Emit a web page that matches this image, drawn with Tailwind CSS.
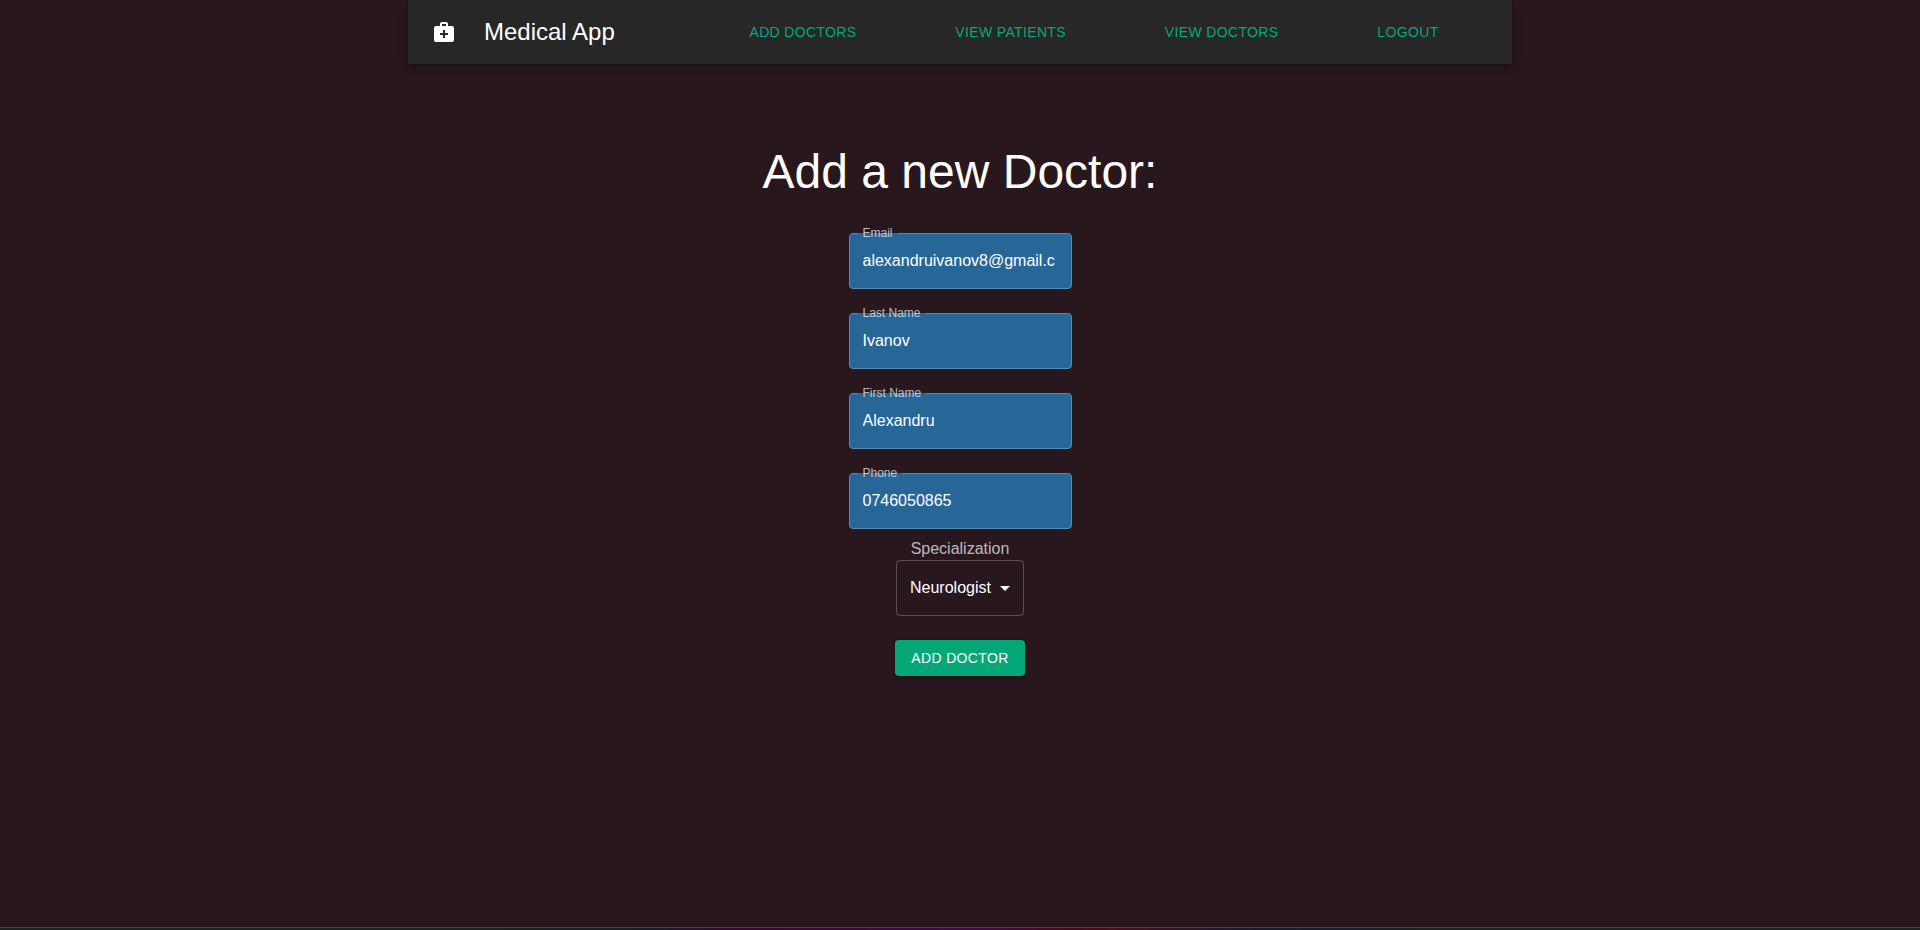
<!DOCTYPE html>
<html lang="en">
<head>
<meta charset="utf-8">
<meta name="viewport" content="width=device-width, initial-scale=1">
<title>Medical App</title>
<script src="https://cdn.jsdelivr.net/npm/@tailwindcss/browser@4"></script>
</head>
<body class="flex min-h-screen flex-col bg-[#28181e] font-['Liberation_Sans',Arial,sans-serif] text-white">
  <div class="mx-auto w-full max-w-6xl px-6">
    <header class="flex min-h-16 items-center bg-[#272727] px-6 shadow-[0_2px_4px_-1px_rgba(0,0,0,0.2),0_4px_5px_0_rgba(0,0,0,0.14),0_1px_10px_0_rgba(0,0,0,0.12)]">
      <div class="flex w-1/4 items-center gap-7">
        <svg class="size-6 shrink-0" viewBox="0 0 24 24" fill="currentColor" aria-hidden="true"><path d="M20 6h-4V4c0-1.100-.9-2-2-2h-4c-1.100 0-2 .9-2 2v2H4c-1.100 0-2 .9-2 2v12c0 1.100.9 2 2 2h16c1.100 0 2-.9 2-2V8c0-1.100-.9-2-2-2zM10 4h4v2h-4V4zm6 11h-3v3h-2v-3H8v-2h3v-3h2v3h3v2z"/></svg>
        <span class="whitespace-nowrap text-2xl">Medical App</span>
      </div>
      <nav class="flex flex-1 flex-wrap justify-around pl-1 text-sm tracking-wide text-[#04a777]">
        <a href="#add-doctors">ADD DOCTORS</a>
        <a href="#view-patients">VIEW PATIENTS</a>
        <a href="#view-doctors">VIEW DOCTORS</a>
        <a href="#logout">LOGOUT</a>
      </nav>
    </header>
  </div>

  <main class="flex flex-1 flex-col items-center px-4 pt-20">
    <h1 class="text-center text-5xl leading-[56px]">Add a new Doctor:</h1>
    <form class="mt-[33px] flex flex-col items-center">
      <div class="flex flex-col gap-6">
        <div class="relative">
          <input id="email" type="text" value="alexandruivanov8@gmail.c" class="block h-14 w-[223px] rounded-sm border border-[#588bb0] bg-[#266798] px-[13px] text-base outline-none">
          <label for="email" class="absolute isolate -top-2 left-[9px] px-[5px] text-xs text-white/70 before:absolute before:inset-x-0 before:top-2 before:-z-10 before:h-px before:bg-[#266798]">Email</label>
        </div>
        <div class="relative">
          <input id="last-name" type="text" value="Ivanov" class="block h-14 w-[223px] rounded-sm border border-[#588bb0] bg-[#266798] px-[13px] text-base outline-none">
          <label for="last-name" class="absolute isolate -top-2 left-[9px] px-[5px] text-xs text-white/70 before:absolute before:inset-x-0 before:top-2 before:-z-10 before:h-px before:bg-[#266798]">Last Name</label>
        </div>
        <div class="relative">
          <input id="first-name" type="text" value="Alexandru" class="block h-14 w-[223px] rounded-sm border border-[#588bb0] bg-[#266798] px-[13px] text-base outline-none">
          <label for="first-name" class="absolute isolate -top-2 left-[9px] px-[5px] text-xs text-white/70 before:absolute before:inset-x-0 before:top-2 before:-z-10 before:h-px before:bg-[#266798]">First Name</label>
        </div>
        <div class="relative">
          <input id="phone" type="tel" value="0746050865" class="block h-14 w-[223px] rounded-sm border border-[#588bb0] bg-[#266798] px-[13px] text-base outline-none">
          <label for="phone" class="absolute isolate -top-2 left-[9px] px-[5px] text-xs text-white/70 before:absolute before:inset-x-0 before:top-2 before:-z-10 before:h-px before:bg-[#266798]">Phone</label>
        </div>
      </div>

      <label for="specialization" class="mt-2 text-base leading-[23px] text-white/70">Specialization</label>
      <div class="relative">
        <select id="specialization" class="block h-14 w-32 appearance-none rounded-sm border border-white/23 bg-transparent pl-[13px] text-base outline-none">
          <option>Neurologist</option>
        </select>
        <svg class="pointer-events-none absolute right-[7px] top-4 size-6" viewBox="0 0 24 24" fill="currentColor" aria-hidden="true"><path d="M7 10l5 5 5-5z"/></svg>
      </div>

      <button type="button" class="mt-6 h-9 rounded-sm bg-[#04a777] px-4 text-sm tracking-wide shadow-[0_3px_1px_-2px_rgba(0,0,0,0.2),0_2px_2px_0_rgba(0,0,0,0.14),0_1px_5px_0_rgba(0,0,0,0.12)]">ADD DOCTOR</button>
    </form>
  </main>

  <footer class="h-[3px] border-t border-[#4a4145] bg-[#202020]">
    <div class="mx-auto h-full w-1/2 bg-[linear-gradient(90deg,#202020_0%,#1c1c26_18%,#350a2c_27%,#3d0c3c_52%,#440a1c_62%,#43101c_66%,#241828_76%,#1a1c2c_86%,#202020_100%)]"></div>
  </footer>
</body>
</html>
